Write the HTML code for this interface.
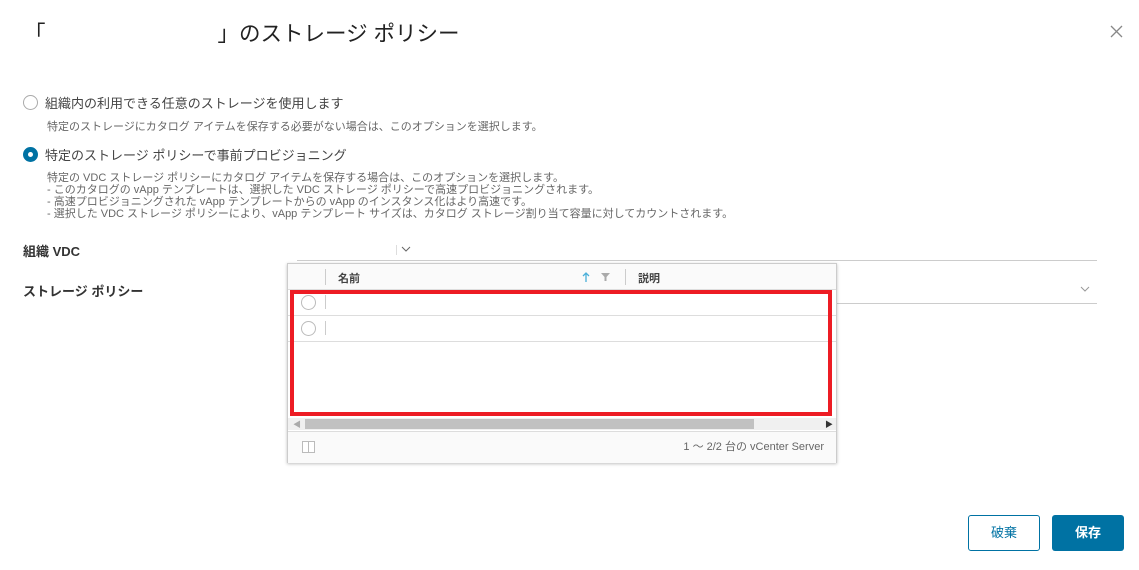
<!DOCTYPE html>
<html><head><meta charset="utf-8"><style>
*{margin:0;padding:0;box-sizing:border-box}
body{width:1139px;height:570px;background:#fff;position:relative;overflow:hidden;font-family:"Liberation Sans","Noto Sans CJK JP",sans-serif;color:#333}
.a{position:absolute;white-space:nowrap}
.radio{position:absolute;width:15px;height:15px;border:1px solid #aaa;border-radius:50%;background:#fff}
.sel{border:none;background:#0072a3}
.sel::after{content:"";position:absolute;left:5px;top:5px;width:5px;height:5px;background:#fff;border-radius:50%}
.small{font-size:11px;color:#666;line-height:12px}
</style></head><body>
<div class="a" style="left:24px;top:17px;font-size:21.5px;color:#222">「　　　　　　　　」のストレージ ポリシー</div>
<svg class="a" style="left:1110px;top:25px" width="13" height="13"><path d="M1 1L12 12M12 1L1 12" stroke="#888" stroke-width="1.3"/></svg>
<div class="radio" style="left:23px;top:95px"></div>
<div class="a" style="left:45px;top:93px;font-size:13px;color:#444">組織内の利用できる任意のストレージを使用します</div>
<div class="a small" style="left:47px;top:121px">特定のストレージにカタログ アイテムを保存する必要がない場合は、このオプションを選択します。</div>
<div class="radio sel" style="left:23px;top:147px"></div>
<div class="a" style="left:45px;top:145px;font-size:13px;color:#444">特定のストレージ ポリシーで事前プロビジョニング</div>
<div class="a small" style="left:47px;top:172px">特定の VDC ストレージ ポリシーにカタログ アイテムを保存する場合は、このオプションを選択します。<br>- このカタログの vApp テンプレートは、選択した VDC ストレージ ポリシーで高速プロビジョニングされます。<br>- 高速プロビジョニングされた vApp テンプレートからの vApp のインスタンス化はより高速です。<br>- 選択した VDC ストレージ ポリシーにより、vApp テンプレート サイズは、カタログ ストレージ割り当て容量に対してカウントされます。</div>
<div class="a" style="left:23px;top:241px;font-size:13px;font-weight:bold;color:#333">組織 VDC</div>
<div class="a" style="left:23px;top:281px;font-size:13px;font-weight:bold;color:#333">ストレージ ポリシー</div>
<div class="a" style="left:297px;top:260px;width:800px;height:1px;background:#ccc"></div>
<div class="a" style="left:396px;top:245px;width:1px;height:10px;background:#ddd"></div>
<svg class="a" style="left:401px;top:246px" width="10" height="7"><path d="M1 1L5 5L9 1" stroke="#666" fill="none"/></svg>
<div class="a" style="left:836px;top:303px;width:261px;height:1px;background:#ccc"></div>
<svg class="a" style="left:1080px;top:286px" width="10" height="7"><path d="M1 1L5 5L9 1" stroke="#999" fill="none"/></svg>
<div class="a" style="left:287px;top:263px;width:550px;height:200px;border:1px solid #ccc;box-shadow:0 1px 3px rgba(0,0,0,.25);background:#fff">
 <div class="a" style="left:0;top:0;width:548px;height:26px;background:#fafafa;border-bottom:1px solid #ddd"></div>
 <div class="a" style="left:37px;top:5px;width:1px;height:16px;background:#ccc"></div>
 <div class="a" style="left:50px;top:6px;font-size:11px;font-weight:bold;color:#444">名前</div>
 <svg class="a" style="left:294px;top:8px" width="8" height="11"><path d="M4 10V1M1 4L4 1L7 4" stroke="#49afd9" stroke-width="1.3" fill="none"/></svg>
 <svg class="a" style="left:313px;top:9px" width="9" height="8"><path d="M0 0H9L5.5 4V8H3.5V4Z" fill="#aaa"/></svg>
 <div class="a" style="left:337px;top:5px;width:1px;height:16px;background:#ccc"></div>
 <div class="a" style="left:350px;top:6px;font-size:11px;font-weight:bold;color:#444">説明</div>
 <div class="radio" style="left:13px;top:31px;border-color:#bbb"></div>
 <div class="a" style="left:37px;top:31px;width:1px;height:14px;background:#ccc"></div>
 <div class="a" style="left:0;top:51px;width:548px;height:1px;background:#ddd"></div>
 <div class="radio" style="left:13px;top:57px;border-color:#bbb"></div>
 <div class="a" style="left:37px;top:57px;width:1px;height:14px;background:#ccc"></div>
 <div class="a" style="left:0;top:77px;width:548px;height:1px;background:#ddd"></div>
 <div class="a" style="left:0;top:154px;width:548px;height:12px;background:#f0f0f0"></div>
 <div class="a" style="left:17px;top:155px;width:449px;height:10px;background:#c1c1c1"></div>
 <div class="a" style="left:5px;top:155px;font-size:8px;color:#aaa">◀</div>
 <div class="a" style="left:537px;top:155px;font-size:8px;color:#333">▶</div>
 <div class="a" style="left:0;top:167px;width:548px;height:32px;background:#fafafa;border-top:1px solid #ddd"></div>
 <div class="a" style="left:14px;top:177px;width:13px;height:12px;border:1px solid #bbb;background:linear-gradient(90deg,#fff 45%,#bbb 45%,#bbb 55%,#fff 55%)"></div>
 <div class="a" style="right:12px;top:174px;font-size:11px;color:#666">1 ～ 2/2 台の vCenter Server</div>
</div>
<div class="a" style="left:290px;top:290px;width:542px;height:126px;border:4px solid #ed1c24"></div>
<div class="a" style="left:968px;top:515px;width:72px;height:36px;border:1px solid #0072a3;border-radius:3px;color:#0072a3;font-size:13px;text-align:center;line-height:34px">破棄</div>
<div class="a" style="left:1052px;top:515px;width:72px;height:36px;background:#0072a3;border-radius:3px;color:#fff;font-size:13px;font-weight:bold;text-align:center;line-height:36px">保存</div>
</body></html>
